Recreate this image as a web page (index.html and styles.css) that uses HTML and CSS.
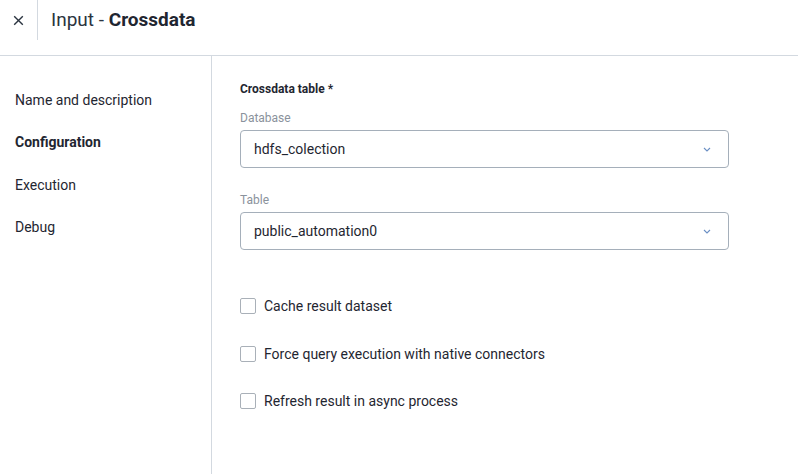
FILE: index.html
```html
<!DOCTYPE html>
<html lang="en">
<head>
<meta charset="utf-8">
<title>Input - Crossdata</title>
<link rel="stylesheet" href="styles.css">
</head>
<body>
<div class="app">
  <header class="header">
    <button class="close" aria-label="Close">
      <svg width="11" height="11" viewBox="0 0 11 11"><path d="M1.2 1.2 L9.8 9.8 M9.8 1.2 L1.2 9.8" stroke="#2b3440" stroke-width="1.4" fill="none"/></svg>
    </button>
    <div class="divider"></div>
    <h1 class="title">Input - <strong>Crossdata</strong></h1>
  </header>
  <div class="body">
    <nav class="sidebar">
      <a class="nav-item">Name and description</a>
      <a class="nav-item active">Configuration</a>
      <a class="nav-item">Execution</a>
      <a class="nav-item">Debug</a>
    </nav>
    <main class="content">
      <div class="section-title">Crossdata table *</div>
      <div class="field">
        <label class="field-label">Database</label>
        <div class="select">
          <span>hdfs_colection</span>
          <svg class="chev" width="8" height="5" viewBox="0 0 8 5"><path d="M1 1 L4 4 L7 1" stroke="#6b8fc4" stroke-width="1.1" fill="none"/></svg>
        </div>
      </div>
      <div class="field">
        <label class="field-label">Table</label>
        <div class="select">
          <span>public_automation0</span>
          <svg class="chev" width="8" height="5" viewBox="0 0 8 5"><path d="M1 1 L4 4 L7 1" stroke="#6b8fc4" stroke-width="1.1" fill="none"/></svg>
        </div>
      </div>
      <div class="checks">
        <label class="check"><span class="box"></span>Cache result dataset</label>
        <label class="check"><span class="box"></span>Force query execution with native connectors</label>
        <label class="check"><span class="box"></span>Refresh result in async process</label>
      </div>
    </main>
  </div>
</div>
</body>
</html>
```

FILE: styles.css
```css
* { box-sizing: border-box; }
html, body { margin: 0; padding: 0; background: #fff; }
body {
  font-family: Roboto, "Liberation Sans", sans-serif;
  color: #1f2631;
  width: 798px;
  height: 474px;
  overflow: hidden;
}
.app { display: flex; flex-direction: column; height: 474px; }
.header {
  height: 56px;
  border-bottom: 1px solid #d3d9e0;
  display: flex;
  align-items: flex-start;
  flex-shrink: 0;
}
.close {
  width: 37px;
  height: 40px;
  border: 0;
  background: none;
  padding: 0;
  display: flex;
  align-items: center;
  justify-content: center;
}
.divider { width: 1px; height: 40px; background: #d3d9e0; }
.title {
  margin: 0;
  padding-left: 13px;
  height: 40px;
  line-height: 40px;
  font-size: 19px;
  font-weight: 400;
  color: #2b3440;
}
.title strong { font-weight: 700; color: #1f2631; }
.body { display: flex; flex: 1; }
.sidebar {
  width: 212px;
  border-right: 1px solid #d3d9e0;
  padding: 34px 0 0 15px;
  display: flex;
  flex-direction: column;
}
.nav-item {
  font-size: 14px;
  line-height: 20px;
  height: 42.4px;
  color: #1f2631;
}
.nav-item.active { font-weight: 700; }
.content {
  flex: 1;
  padding: 25px 0 0 28px;
}
.section-title {
  font-size: 12px;
  font-weight: 700;
  line-height: 16px;
  margin-bottom: 13px;
}
.field { width: 489px; margin-bottom: 24px; }
.field-label {
  display: block;
  font-size: 12px;
  line-height: 16px;
  color: #8a929c;
  margin-bottom: 4px;
}
.select {
  height: 38px;
  border: 1px solid #a5afba;
  border-radius: 4px;
  display: flex;
  align-items: center;
  justify-content: space-between;
  padding: 0 17px 0 13px;
  font-size: 14px;
  color: #1f2631;
}
.checks {
  padding-top: 8px;
  display: flex;
  flex-direction: column;
}
.check {
  display: flex;
  align-items: center;
  font-size: 14px;
  height: 47.7px;
  color: #1f2631;
}
.box {
  width: 16px;
  height: 16px;
  border: 1px solid #a9b0b8;
  border-radius: 2px;
  margin-right: 8px;
  flex-shrink: 0;
}
```
